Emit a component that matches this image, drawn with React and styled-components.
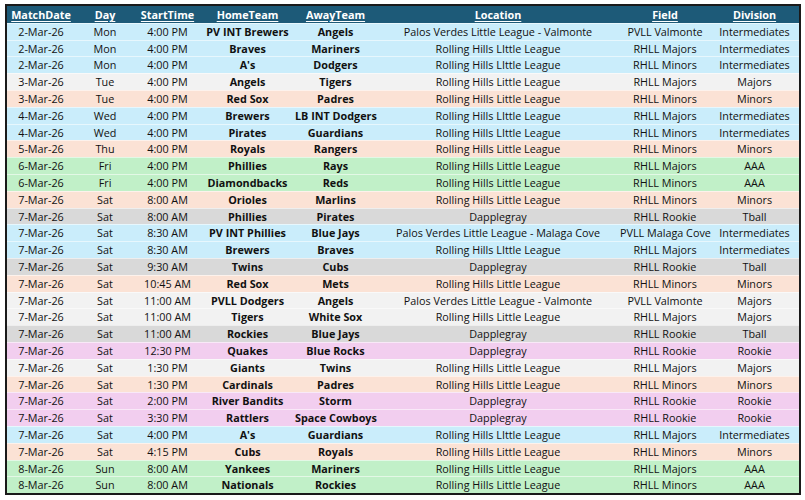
import React from "react";
import styled, { createGlobalStyle } from "styled-components";

const GlobalStyle = createGlobalStyle`
  html, body {
    margin: 0;
    padding: 0;
    background: #ffffff;
  }
  body {
    font-family: "Open Sans", "Liberation Sans", sans-serif;
  }
`;

const COLORS = {
  blue: "#caedfb",
  white: "#f2f2f2",
  peach: "#fbe2d5",
  green: "#c1f0c8",
  gray: "#d9d9d9",
  pink: "#f2ceef",
};

const DIVISION_COLOR = {
  Intermediates: "blue",
  Majors: "white",
  Minors: "peach",
  AAA: "green",
  Tball: "gray",
  Rookie: "pink",
};

const RH = "Rolling Hills Little League";
const RHI = "Rolling Hills LIttle League";
const DG = "Dapplegray";

const games = [
  ["2-Mar-26", "Mon", "4:00 PM", "PV INT Brewers", "Angels", "Palos Verdes Little League - Valmonte", "PVLL Valmonte", "Intermediates"],
  ["2-Mar-26", "Mon", "4:00 PM", "Braves", "Mariners", RHI, "RHLL Majors", "Intermediates"],
  ["2-Mar-26", "Mon", "4:00 PM", "A's", "Dodgers", RHI, "RHLL Minors", "Intermediates"],
  ["3-Mar-26", "Tue", "4:00 PM", "Angels", "Tigers", RH, "RHLL Majors", "Majors"],
  ["3-Mar-26", "Tue", "4:00 PM", "Red Sox", "Padres", RH, "RHLL Minors", "Minors"],
  ["4-Mar-26", "Wed", "4:00 PM", "Brewers", "LB INT Dodgers", RHI, "RHLL Majors", "Intermediates"],
  ["4-Mar-26", "Wed", "4:00 PM", "Pirates", "Guardians", RHI, "RHLL Minors", "Intermediates"],
  ["5-Mar-26", "Thu", "4:00 PM", "Royals", "Rangers", RH, "RHLL Minors", "Minors"],
  ["6-Mar-26", "Fri", "4:00 PM", "Phillies", "Rays", RH, "RHLL Majors", "AAA"],
  ["6-Mar-26", "Fri", "4:00 PM", "Diamondbacks", "Reds", RH, "RHLL Minors", "AAA"],
  ["7-Mar-26", "Sat", "8:00 AM", "Orioles", "Marlins", RH, "RHLL Minors", "Minors"],
  ["7-Mar-26", "Sat", "8:00 AM", "Phillies", "Pirates", DG, "RHLL Rookie", "Tball"],
  ["7-Mar-26", "Sat", "8:30 AM", "PV INT Phillies", "Blue Jays", "Palos Verdes Little League - Malaga Cove", "PVLL Malaga Cove", "Intermediates"],
  ["7-Mar-26", "Sat", "8:30 AM", "Brewers", "Braves", RHI, "RHLL Majors", "Intermediates"],
  ["7-Mar-26", "Sat", "9:30 AM", "Twins", "Cubs", DG, "RHLL Rookie", "Tball"],
  ["7-Mar-26", "Sat", "10:45 AM", "Red Sox", "Mets", RH, "RHLL Minors", "Minors"],
  ["7-Mar-26", "Sat", "11:00 AM", "PVLL Dodgers", "Angels", "Palos Verdes Little League - Valmonte", "PVLL Valmonte", "Majors"],
  ["7-Mar-26", "Sat", "11:00 AM", "Tigers", "White Sox", RH, "RHLL Majors", "Majors"],
  ["7-Mar-26", "Sat", "11:00 AM", "Rockies", "Blue Jays", DG, "RHLL Rookie", "Tball"],
  ["7-Mar-26", "Sat", "12:30 PM", "Quakes", "Blue Rocks", DG, "RHLL Rookie", "Rookie"],
  ["7-Mar-26", "Sat", "1:30 PM", "Giants", "Twins", RH, "RHLL Majors", "Majors"],
  ["7-Mar-26", "Sat", "1:30 PM", "Cardinals", "Padres", RH, "RHLL Minors", "Minors"],
  ["7-Mar-26", "Sat", "2:00 PM", "River Bandits", "Storm", DG, "RHLL Rookie", "Rookie"],
  ["7-Mar-26", "Sat", "3:30 PM", "Rattlers", "Space Cowboys", DG, "RHLL Rookie", "Rookie"],
  ["7-Mar-26", "Sat", "4:00 PM", "A's", "Guardians", RHI, "RHLL Majors", "Intermediates"],
  ["7-Mar-26", "Sat", "4:15 PM", "Cubs", "Royals", RH, "RHLL Minors", "Minors"],
  ["8-Mar-26", "Sun", "8:00 AM", "Yankees", "Mariners", RH, "RHLL Majors", "AAA"],
  ["8-Mar-26", "Sun", "8:00 AM", "Nationals", "Rockies", RH, "RHLL Minors", "AAA"],
];

const HEADERS = ["MatchDate", "Day", "StartTime", "HomeTeam", "AwayTeam", "Location", "Field", "Division"];

const Page = styled.div`
  padding: 4px 4px 4px 5px;
`;

const Sheet = styled.div`
  width: 796px;
  border: 2px solid #1a1a1a;
  box-sizing: border-box;
  font-size: 10.8px;
  color: #111;
`;

const Row = styled.div`
  display: grid;
  grid-template-columns: 68px 60px 65px 95px 81px 244px 90px 89px;
  height: 16.8px;
  align-items: center;
  background: ${p => COLORS[p.tone] || "#f2f2f2"};
  border-top: 1px solid rgba(255, 255, 255, 0.55);
  box-sizing: border-box;
`;

const HeaderRow = styled(Row)`
  background: #1d5a78;
  border-top: none;
`;

const HeaderCell = styled.div`
  text-align: center;
  color: #ffffff;
  font-weight: 700;
  text-decoration: underline;
  text-underline-offset: 2px;
  white-space: nowrap;
`;

const Cell = styled.div`
  text-align: center;
  white-space: nowrap;
  font-weight: ${p => (p.bold ? 700 : 400)};
  line-height: 16px;
`;

export default function App() {
  return (
    <Page>
      <GlobalStyle />
      <Sheet>
        <HeaderRow>
          {HEADERS.map(h => (
            <HeaderCell key={h}>{h}</HeaderCell>
          ))}
        </HeaderRow>
        {games.map((g, i) => (
          <Row key={i} tone={DIVISION_COLOR[g[7]]}>
            {g.map((v, j) => (
              <Cell key={j} bold={j === 3 || j === 4}>
                {v}
              </Cell>
            ))}
          </Row>
        ))}
      </Sheet>
    </Page>
  );
}
